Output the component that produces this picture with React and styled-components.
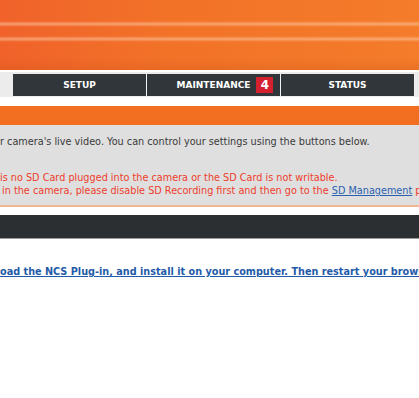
import React from "react";
import styled, { createGlobalStyle } from "styled-components";

const Global = createGlobalStyle`
  html, body { margin: 0; padding: 0; background: #ffffff; }
  body { font-family: "DejaVu Sans", Verdana, sans-serif; overflow: hidden; }
`;

const Page = styled.div`
  width: 419px;
  height: 398px;
  overflow: hidden;
  background: #fff;
  display: flex;
  flex-direction: column;
`;

const Header = styled.div`
  height: 70px;
  flex: none;
  background:
    linear-gradient(180deg,
      rgba(255,255,255,0) 0px,
      rgba(255,255,255,0) 21px,
      rgba(255,205,170,0.55) 24px,
      rgba(255,255,255,0) 27px,
      rgba(255,255,255,0) 36px,
      rgba(255,205,170,0.55) 39px,
      rgba(255,255,255,0) 42px,
      rgba(255,255,255,0) 58px,
      rgba(200,80,20,0.25) 70px),
    linear-gradient(90deg, #f0622a 0%, #f27228 40%, #f47c2a 100%);
`;

const NavRow = styled.div`
  margin-top: 2px;
  height: 25px;
  flex: none;
  display: flex;
  background: #ececec;
`;

const NavLead = styled.div`
  width: 13px;
  flex: none;
`;

const Tab = styled.div`
  position: relative;
  width: 133px;
  flex: none;
  margin-top: 2px;
  margin-bottom: 1px;
  border-right: 1px solid #f2f2f2;
  background: #30363a;
  color: #fff;
  font-weight: bold;
  font-size: 9px;
  display: flex;
  align-items: center;
  justify-content: center;
`;

const Label = styled.span`
  position: relative;
`;

const Badge = styled.span`
  position: absolute;
  left: calc(100% + 6px);
  top: 50%;
  transform: translateY(-50%);
  display: inline-flex;
  align-items: center;
  justify-content: center;
  width: 17px;
  height: 16px;
  background: #d4202f;
  color: #fff;
  font-size: 12px;
  font-weight: bold;
`;

const OrangeBar = styled.div`
  margin-top: 9px;
  height: 19px;
  flex: none;
  background: #f26f21;
`;

const InfoBox = styled.div`
  height: 82px;
  box-sizing: border-box;
  flex: none;
  background: #dfdfdf;
  border-bottom: 2px solid #f0b795;
  font-size: 9.7px;
  line-height: 13px;
  padding-top: 10px;
  display: flex;
  flex-direction: column;
`;

const Line = styled.div`
  white-space: nowrap;
  color: ${(p) => (p.$warn ? "#ee3d2b" : "#3a3a3a")};
  margin-top: ${(p) => p.$gap || 0}px;
  padding-left: ${(p) => p.$indent || 0}px;
`;

const InlineLink = styled.a`
  color: #2a5fb0;
  text-decoration: underline;
`;

const DarkBar = styled.div`
  margin-top: 8px;
  height: 23px;
  flex: none;
  background: #2b2f32;
  border-bottom: 1px solid #9a9a9a;
`;

const PluginLink = styled.a`
  margin-top: 27px;
  display: block;
  white-space: nowrap;
  font-weight: bold;
  font-size: 9.7px;
  color: #1f5ba8;
  text-decoration: underline;
`;

export default function App() {
  return (
    <Page>
      <Global />
      <Header />
      <NavRow>
        <NavLead />
        <Tab>SETUP</Tab>
        <Tab>
          <Label>
            MAINTENANCE
            <Badge>4</Badge>
          </Label>
        </Tab>
        <Tab>STATUS</Tab>
      </NavRow>
      <OrangeBar />
      <InfoBox>
        <Line>r camera's live video. You can control your settings using the buttons below.</Line>
        <Line $warn $gap={23}>is no SD Card plugged into the camera or the SD Card is not writable.</Line>
        <Line $warn $indent={2}>
          in the camera, please disable SD Recording first and then go to the{" "}
          <InlineLink href="#">SD Management</InlineLink> page
        </Line>
      </InfoBox>
      <DarkBar />
      <PluginLink href="#">
        oad the NCS Plug-in, and install it on your computer. Then restart your browser.
      </PluginLink>
    </Page>
  );
}
